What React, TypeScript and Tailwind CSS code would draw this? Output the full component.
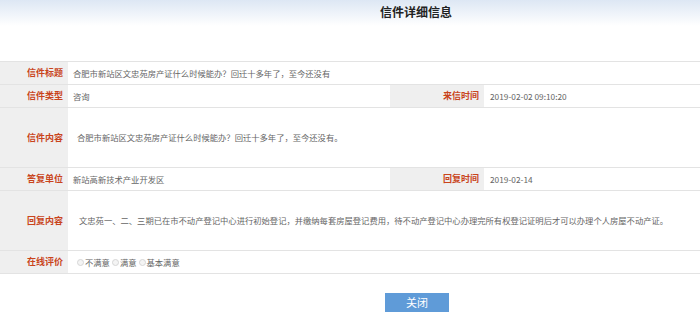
const font = { fontFamily: '"Noto Sans CJK SC", "Liberation Sans", sans-serif' };

function Label({ children }: { children: string }) {
  return (
    <div className="flex items-center justify-end bg-[#efefef] pr-[5px] text-[9px] font-bold text-[#c9441b]">
      {children}
    </div>
  );
}

function Radio({ label }: { label: string }) {
  return (
    <span className="flex items-center">
      <span className="mr-[1px] inline-block h-[7px] w-[7px] rounded-full border border-[#d6d6d6] bg-[#f4f4f4]" />
      <span>{label}</span>
    </span>
  );
}

export default function App() {
  return (
    <div className="h-[323px] w-[700px] overflow-hidden bg-white" style={font}>
      <div className="h-[26px] bg-gradient-to-b from-[#dde7f4] to-white pt-[4px]">
        <h1 className="ml-[380px] text-[12px] font-bold leading-[16px] text-[#222]">信件详细信息</h1>
      </div>

      <div className="mt-[35px] border-t border-[#e3e3e3] text-[8.3px] text-[#666]">
        <div className="grid h-[23px] grid-cols-[68px_1fr] border-b border-[#e3e3e3]">
          <Label>信件标题</Label>
          <div className="flex items-center pl-[5px]">合肥市新站区文忠苑房产证什么时候能办？回迁十多年了，至今还没有</div>
        </div>
        <div className="grid h-[23px] grid-cols-[68px_322px_94px_1fr] border-b border-[#e3e3e3]">
          <Label>信件类型</Label>
          <div className="flex items-center pl-[5px]">咨询</div>
          <Label>来信时间</Label>
          <div className="flex items-center pl-[6px]">2019-02-02 09:10:20</div>
        </div>
        <div className="grid h-[60px] grid-cols-[68px_1fr] border-b border-[#e3e3e3]">
          <Label>信件内容</Label>
          <div className="flex items-center pl-[9px]">合肥市新站区文忠苑房产证什么时候能办？回迁十多年了，至今还没有。</div>
        </div>
        <div className="grid h-[23px] grid-cols-[68px_322px_94px_1fr] border-b border-[#e3e3e3]">
          <Label>答复单位</Label>
          <div className="flex items-center pl-[5px]">新站高新技术产业开发区</div>
          <Label>回复时间</Label>
          <div className="flex items-center pl-[6px]">2019-02-14</div>
        </div>
        <div className="grid h-[60px] grid-cols-[68px_1fr] border-b border-[#e3e3e3]">
          <Label>回复内容</Label>
          <div className="flex items-center pl-[11px]">
            文忠苑一、二、三期已在市不动产登记中心进行初始登记，并缴纳每套房屋登记费用，待不动产登记中心办理完所有权登记证明后才可以办理个人房屋不动产证。
          </div>
        </div>
        <div className="grid h-[23px] grid-cols-[68px_1fr] border-b border-[#e3e3e3]">
          <Label>在线评价</Label>
          <div className="flex items-center gap-[2px] pl-[9px]">
            <Radio label="不满意" />
            <Radio label="满意" />
            <Radio label="基本满意" />
          </div>
        </div>
      </div>

      <button className="ml-[385px] mt-[19px] h-[19px] w-[64px] bg-[#5f9bd8] text-[11px] text-white">关闭</button>
    </div>
  );
}
